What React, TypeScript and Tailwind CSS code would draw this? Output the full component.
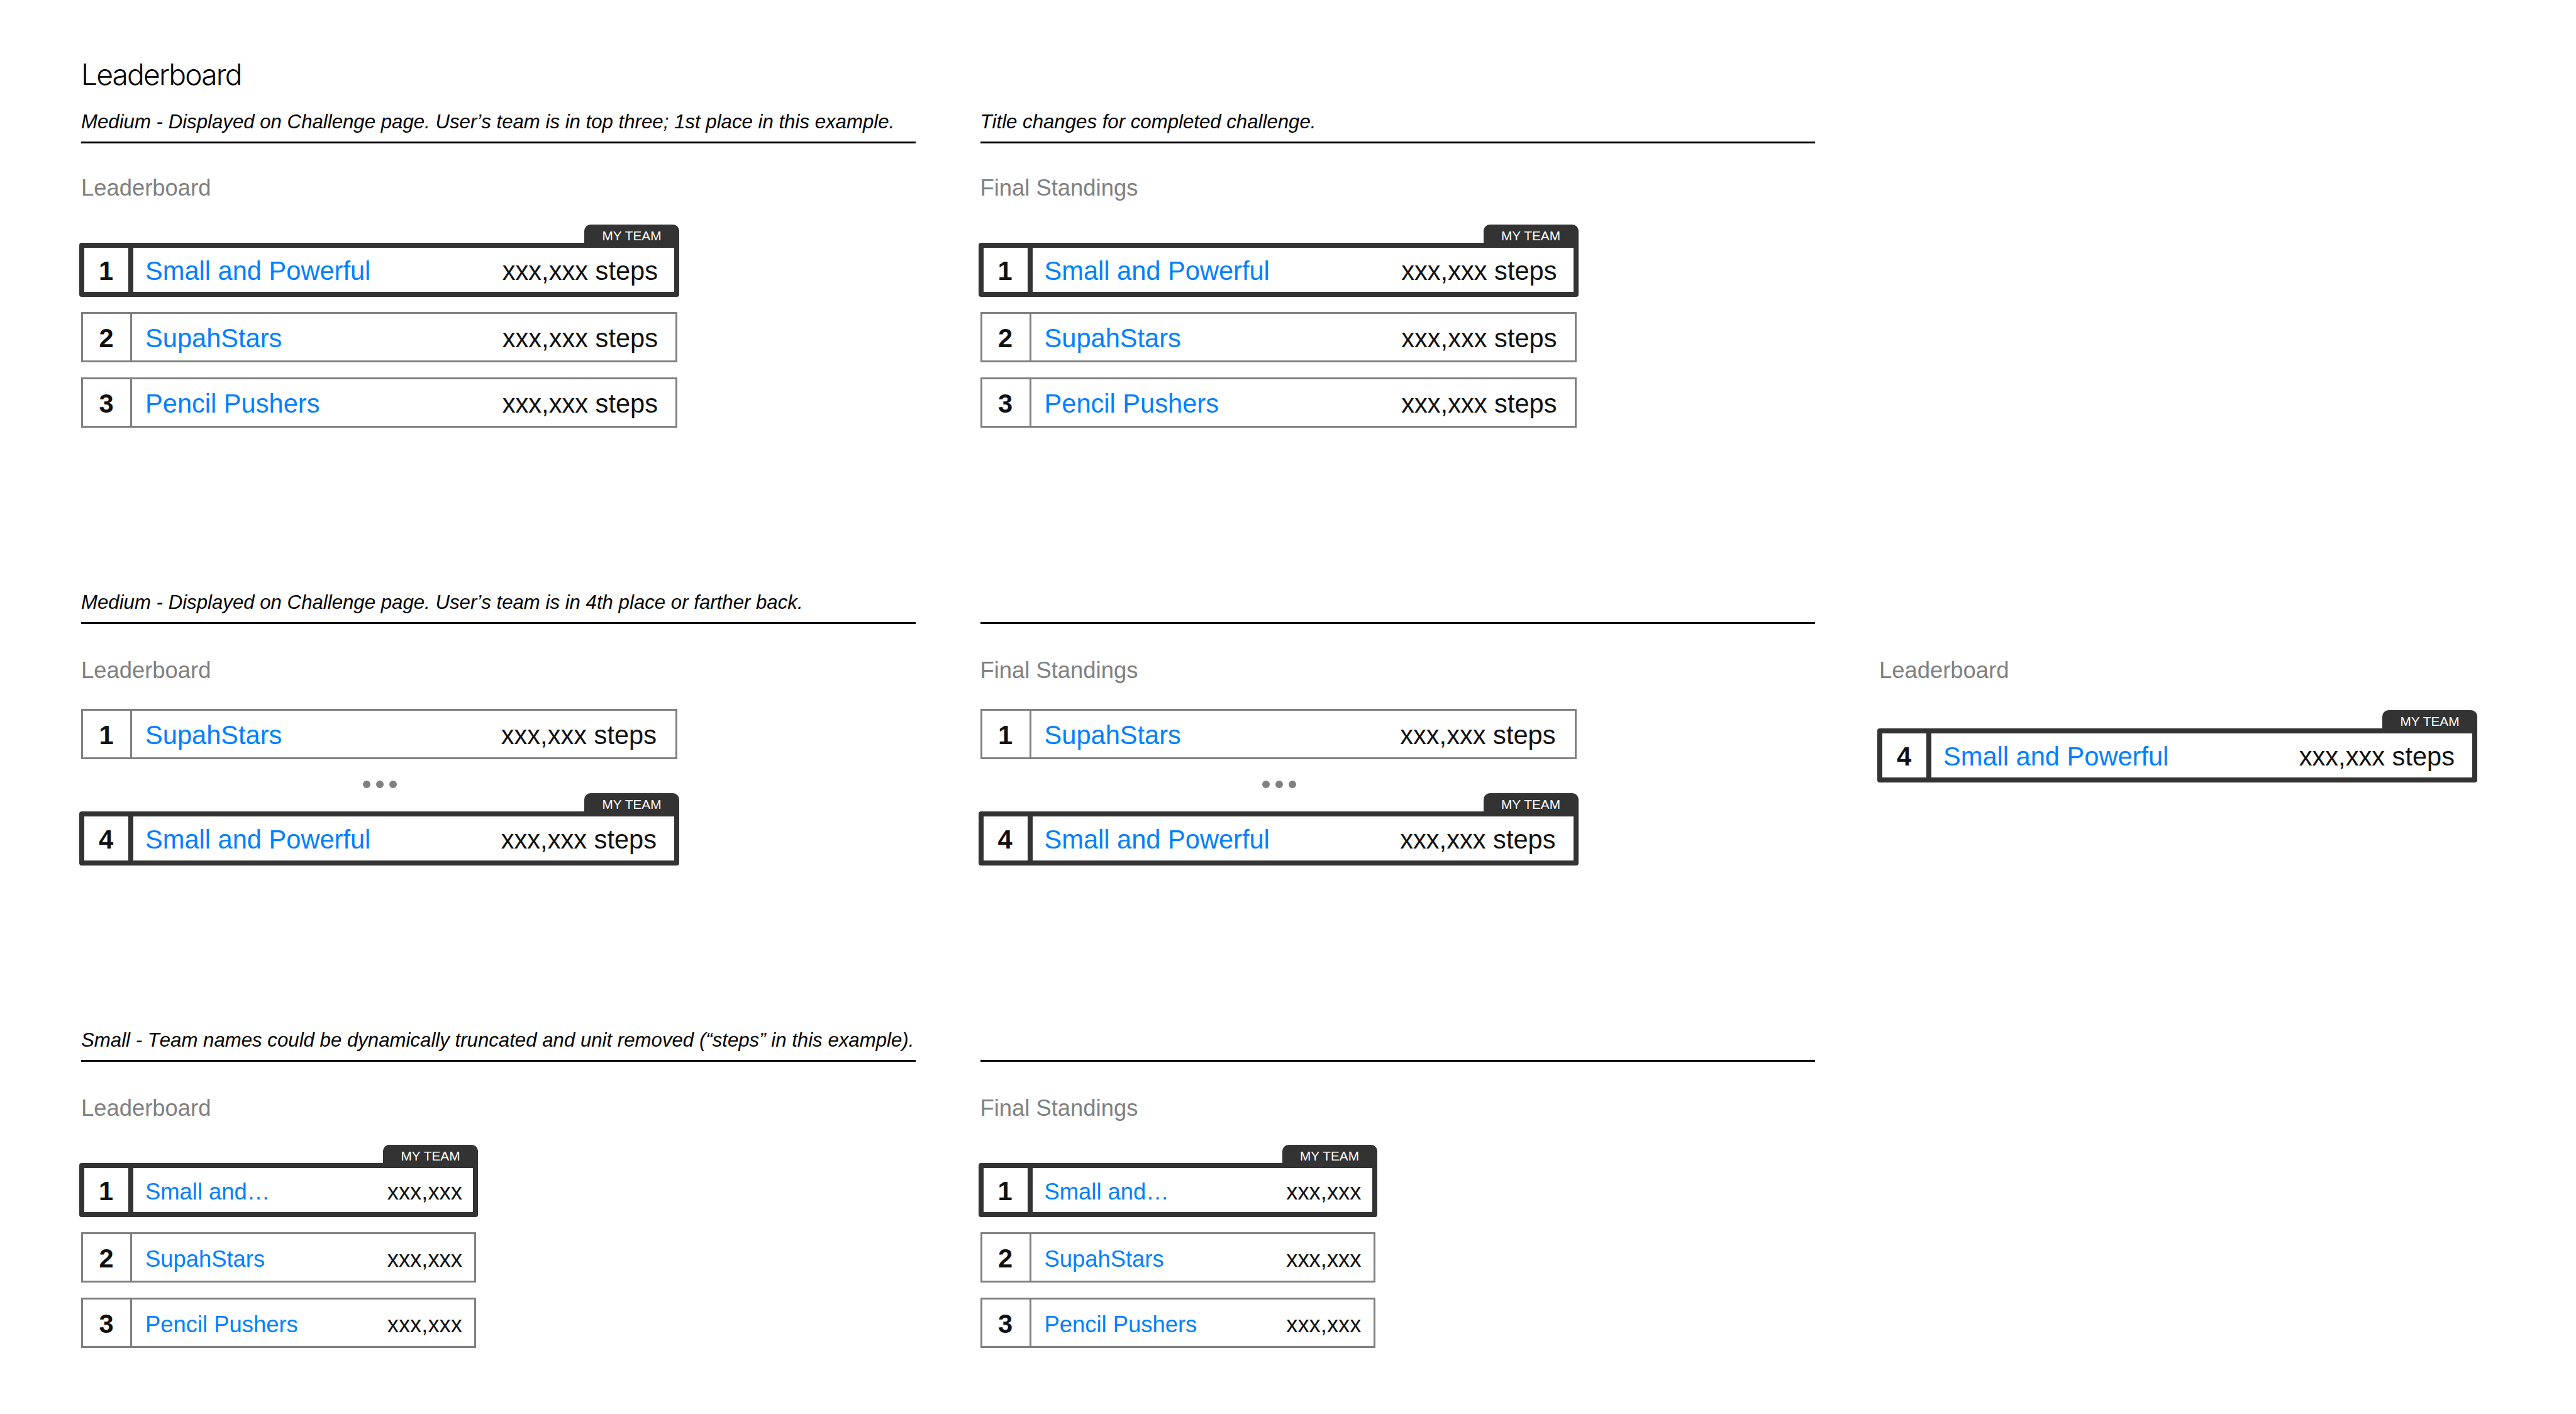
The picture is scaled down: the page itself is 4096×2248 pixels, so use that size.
import clsx from "clsx";

type Team = {
  rank: number;
  name: string;
  score: string;
  mine?: boolean;
};

type Size = "medium" | "small";

const topThree: Team[] = [
  { rank: 1, name: "Small and Powerful", score: "xxx,xxx steps", mine: true },
  { rank: 2, name: "SupahStars", score: "xxx,xxx steps" },
  { rank: 3, name: "Pencil Pushers", score: "xxx,xxx steps" },
];

const topThreeSmall: Team[] = [
  { rank: 1, name: "Small and…", score: "xxx,xxx", mine: true },
  { rank: 2, name: "SupahStars", score: "xxx,xxx" },
  { rank: 3, name: "Pencil Pushers", score: "xxx,xxx" },
];

const leader: Team = { rank: 1, name: "SupahStars", score: "xxx,xxx steps" };
const myTeam: Team = { rank: 4, name: "Small and Powerful", score: "xxx,xxx steps", mine: true };

// One team. The user's own team gets the heavy frame and the tab on top
const TeamRow = ({ team, size = "medium", scoreClass }: { team: Team; size?: Size; scoreClass?: string }) => {
  const small = size === "small";

  return (
    <div className={clsx("flex flex-col", team.mine && "-mx-[3px]")}>
      {team.mine && (
        <div className="self-end w-[151px] h-[37px] -mb-2 pt-[3px] rounded-t-[10px] bg-[#333] text-white text-[20.8px] leading-[29px] text-center">
          MY TEAM
        </div>
      )}
      <div
        className={clsx(
          "flex bg-white",
          team.mine ? "h-[86px] border-8 border-[#333] rounded-[4px]" : "h-[80px] border-3 border-[#808080]"
        )}
      >
        <div
          className={clsx(
            "w-[78px] shrink-0 flex items-center justify-center pt-[3px] pr-[1px] text-[41.6px] leading-none font-bold",
            team.mine ? "border-r-8 border-[#333]" : "border-r-3 border-[#808080]"
          )}
        >
          {team.rank}
        </div>
        <div
          className={clsx(
            "flex-1 flex items-center justify-between leading-none whitespace-nowrap",
            small ? "text-[36.4px] pt-[6px]" : "text-[41.6px] pt-[3px]",
            team.mine ? "pl-[19px]" : "pl-[21px]",
            small && (team.mine ? "pr-[17px]" : "pr-[19px]"),
            !small && (team.mine ? "pr-[26px]" : "pr-[28px]")
          )}
        >
          <a className="text-[#0080ff]">{team.name}</a>
          <span className={scoreClass}>{team.score}</span>
        </div>
      </div>
    </div>
  );
};

const Note = ({ children }: { children?: string }) => (
  <p className="h-[55px] border-b-3 border-black text-black italic text-[31.2px] leading-[41px] whitespace-nowrap [font-kerning:none]">
    {children}
  </p>
);

const Label = ({ children }: { children: string }) => (
  <h2 className="text-[#808080] text-[36.4px] leading-[44px]">{children}</h2>
);

const Dots = () => (
  <div className="flex justify-center gap-[9px] mt-[34px] mb-[8px] pl-[2px]">
    <span className="size-3 rounded-full bg-[#808080]" />
    <span className="size-3 rounded-full bg-[#808080]" />
    <span className="size-3 rounded-full bg-[#808080]" />
  </div>
);

const TopThree = ({ title, note }: { title: string; note?: string }) => (
  <div>
    <Note>{note}</Note>
    <div className="mt-[49px]">
      <Label>{title}</Label>
    </div>
    <div className="w-[948px] mt-[36px] flex flex-col gap-[24px]">
      {topThree.map((team) => (
        <TeamRow key={team.rank} team={team} />
      ))}
    </div>
  </div>
);

const FartherBack = ({ title, note }: { title: string; note?: string }) => (
  <div>
    <Note>{note}</Note>
    <div className="mt-[52px]">
      <Label>{title}</Label>
    </div>
    <div className="w-[948px] mt-[39px]">
      <TeamRow team={leader} scoreClass="pr-[2px]" />
      <Dots />
      <TeamRow team={myTeam} scoreClass="pr-[2px]" />
    </div>
  </div>
);

const SmallBoard = ({ title, note }: { title: string; note?: string }) => (
  <div>
    <Note>{note}</Note>
    <div className="mt-[52px]">
      <Label>{title}</Label>
    </div>
    <div className="w-[628px] mt-[36px] flex flex-col gap-[24px]">
      {topThreeSmall.map((team) => (
        <TeamRow key={team.rank} team={team} size="small" />
      ))}
    </div>
  </div>
);

const App = () => {
  return (
    <div className="w-[4096px] h-[2248px] overflow-hidden bg-white pl-[129px] text-[#111] font-['Liberation_Sans',Arial,sans-serif]">
      <h1 className="h-[173px] pt-[90px] text-black text-[46.2px] leading-[56px] font-light tracking-[-0.04em] font-['Inter','Liberation_Sans',sans-serif]">
        Leaderboard
      </h1>

      {/* User's team on the podium */}
      <section className="h-[764px] grid grid-cols-[1327px_1327px] gap-x-[102.5px] content-start">
        <TopThree
          title="Leaderboard"
          note="Medium - Displayed on Challenge page. User’s team is in top three; 1st place in this example."
        />
        <TopThree title="Final Standings" note="Title changes for completed challenge." />
      </section>

      {/* User's team in 4th place or lower */}
      <section className="h-[696px] grid grid-cols-[1327px_1327px_948px] gap-x-[102.5px] content-start">
        <FartherBack
          title="Leaderboard"
          note="Medium - Displayed on Challenge page. User’s team is in 4th place or farther back."
        />
        <FartherBack title="Final Standings" />
        <div className="pt-[107px]">
          <Label>Leaderboard</Label>
          <div className="mt-[41px]">
            <TeamRow team={myTeam} scoreClass="pr-[2px]" />
          </div>
        </div>
      </section>

      {/* Narrow version */}
      <section className="grid grid-cols-[1327px_1327px] gap-x-[102.5px] content-start">
        <SmallBoard
          title="Leaderboard"
          note="Small - Team names could be dynamically truncated and unit removed (“steps” in this example)."
        />
        <SmallBoard title="Final Standings" />
      </section>
    </div>
  );
};

export default App;
